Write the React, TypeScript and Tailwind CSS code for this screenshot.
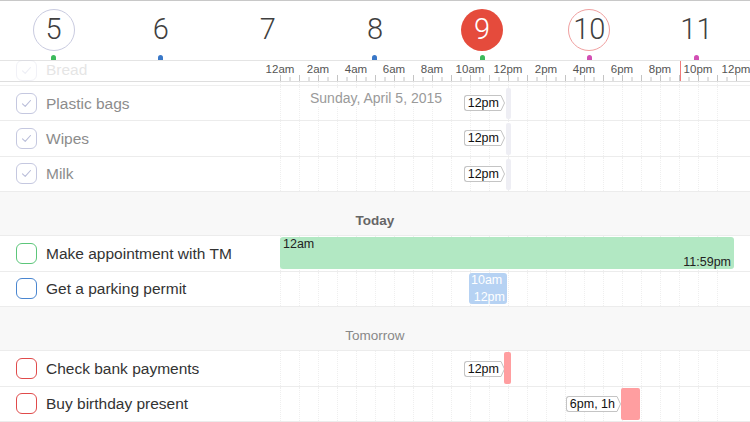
import React from 'react';

const days = [
  { n: '5', circle: 'border border-[#c9cbe0] text-[#3f3f3f]', dot: 'bg-[#3dba5c]' },
  { n: '6', circle: 'text-[#3f3f3f]', dot: 'bg-[#3a78c8]' },
  { n: '7', circle: 'text-[#3f3f3f]', dot: '' },
  { n: '8', circle: 'text-[#3f3f3f]', dot: 'bg-[#3a78c8]' },
  { n: '9', circle: 'bg-[#e54b3c] text-white', dot: 'bg-[#3dba5c]' },
  { n: '10', circle: 'border border-[#f0a0a0] text-[#3f3f3f]', dot: 'bg-[#d24fb4]' },
  { n: '11', circle: 'text-[#3f3f3f]', dot: 'bg-[#d24fb4]' },
];

const hours = ['12am', '2am', '4am', '6am', '8am', '10am', '12pm', '2pm', '4pm', '6pm', '8pm', '10pm', '12pm'];

function Grid() {
  return (
    <div className="absolute inset-0 flex pointer-events-none">
      {Array.from({ length: 24 }).map((_, i) => (
        <div key={i} className="w-[19px] shrink-0 h-full border-l border-dotted border-[#efefef]" />
      ))}
    </div>
  );
}

function Checkbox({ color, done }: { color: string; done?: boolean }) {
  return (
    <div className={`w-[21px] h-[21px] rounded-[6px] border flex items-center justify-center shrink-0 ${color}`}>
      {done && (
        <svg width="11" height="9" viewBox="0 0 11 9">
          <path d="M1.5 4.8 L4.2 7.3 L9.5 1.5" fill="none" stroke="#b9bdd9" strokeWidth="1.1" strokeLinecap="round" strokeLinejoin="round" />
        </svg>
      )}
    </div>
  );
}

function Tag({ text, className }: { text: string; className: string }) {
  return (
    <div className={`absolute flex items-center ${className}`}>
      <div className="h-[16px] pl-[3px] pr-[1px] bg-white border border-r-0 border-[#c4c4c4] rounded-l-[3px] text-[12.5px] leading-[14px] text-[#111]">
        {text}
      </div>
      <svg width="6" height="16" viewBox="0 0 6 16" className="-ml-px">
        <path d="M0 0.5 L2 0.5 L5.5 8 L2 15.5 L0 15.5" fill="white" stroke="#c4c4c4" strokeWidth="1" />
      </svg>
    </div>
  );
}

function Row({ box, label, done, children }: { box: string; label: string; done?: boolean; children?: React.ReactNode }) {
  return (
    <div className="flex h-[35.3px] border-b border-[#ececec]">
      <div className="w-[280px] shrink-0 flex items-center pl-4 gap-[9px]">
        <Checkbox color={box} done={done} />
        <span className={done ? 'text-[15.5px] text-[#8c8c8c]' : 'text-[15.5px] text-[#333]'}>{label}</span>
      </div>
      <div className="relative flex-1">
        <Grid />
        {children}
      </div>
    </div>
  );
}

function Section({ label, bold }: { label: string; bold?: boolean }) {
  return (
    <div className="h-[44.5px] bg-[#f8f8f8] border-b border-[#ececec] flex items-end justify-center pb-[4px]">
      <span className={bold ? 'text-[13.5px] font-bold text-[#666]' : 'text-[13.5px] text-[#888]'}>{label}</span>
    </div>
  );
}

export default function App() {
  return (
    <div className="w-[750px] h-[422px] overflow-hidden bg-white border-t border-[#c8c8c8] font-['Liberation_Sans',Arial,sans-serif]">
      {/* day strip */}
      <div className="grid grid-cols-7 border-b border-[#e4e4e4]">
        {days.map((d) => (
          <div key={d.n} className="flex flex-col items-center pt-[8px]">
            <div className={`w-[42px] h-[42px] rounded-full flex items-center justify-center font-['Roboto',sans-serif] font-light text-[29px] ${d.circle}`}>
              {d.n}
            </div>
            <div className={`mt-[4px] w-[5px] h-[5px] rounded-t-full ${d.dot}`} />
          </div>
        ))}
      </div>

      {/* ruler */}
      <div className="relative flex h-[21px] border-b border-[#dedede]">
        <div className="w-[280px] shrink-0 flex items-center pl-4 gap-[9px] opacity-25 -mt-[2px]">
          <Checkbox color="border-[#c9cbe0]" done />
          <span className="text-[15.5px] text-[#999]">Bread</span>
        </div>
        <div className="relative flex-1">
          <div className="flex -ml-[19px] pt-[2px]">
            {hours.map((h, i) => (
              <div key={i} className="w-[38px] shrink-0 text-center text-[11.5px] leading-[13px] text-[#555]">{h}</div>
            ))}
          </div>
          <svg width="470" height="7" className="absolute left-0 bottom-0">
            {Array.from({ length: 49 }).map((_, i) => (
              <line key={i} x1={i * 9.5 + 0.5} x2={i * 9.5 + 0.5} y1={i % 2 === 0 ? 1 : 3} y2={7} stroke="#c4c4c4" strokeWidth="1" />
            ))}
          </svg>
          <div className="absolute left-[400px] top-0 bottom-0 w-px bg-[#f07a7a]" />
        </div>
      </div>
      <div className="flex h-[4px] border-b border-[#efefef]">
        <div className="w-[280px]" />
        <div className="relative flex-1"><Grid /></div>
      </div>

      <Row box="border-[#c5c8e0]" label="Plastic bags" done>
        <div className="absolute left-[26px] top-[3px] px-[4px] bg-white/90 text-[14px] leading-[18px] text-[#9a9a9a]">Sunday, April 5, 2015</div>
        <Tag text="12pm" className="right-[calc(100%-225px)] top-1/2 -translate-y-1/2" />
        <div className="absolute left-[226px] top-[2px] bottom-[1px] w-[5px] rounded-[2px] bg-[#eeeef4]" />
      </Row>
      <Row box="border-[#c5c8e0]" label="Wipes" done>
        <Tag text="12pm" className="right-[calc(100%-225px)] top-1/2 -translate-y-1/2" />
        <div className="absolute left-[226px] top-[2px] bottom-[1px] w-[5px] rounded-[2px] bg-[#eeeef4]" />
      </Row>
      <Row box="border-[#c5c8e0]" label="Milk" done>
        <Tag text="12pm" className="right-[calc(100%-225px)] top-1/2 -translate-y-1/2" />
        <div className="absolute left-[226px] top-[2px] bottom-[1px] w-[5px] rounded-[2px] bg-[#eeeef4]" />
      </Row>

      <Section label="Today" bold />

      <Row box="border-[#5cc67a]" label="Make appointment with TM">
        <div className="absolute left-0 top-[1px] bottom-[2px] w-[454px] rounded-[3px] bg-[#b2e8c3] flex flex-col justify-between px-[3px] text-[12.5px] leading-[14px] text-[#222]">
          <span>12am</span>
          <span className="self-end">11:59pm</span>
        </div>
      </Row>
      <Row box="border-[#4a86d0]" label="Get a parking permit">
        <div className="absolute left-[189px] top-[1px] bottom-[2px] w-[38px] rounded-[3px] bg-[#b6d2f3] flex flex-col justify-between px-[2px] text-[12.5px] leading-[14px] text-white">
          <span>10am</span>
          <span className="self-end">12pm</span>
        </div>
      </Row>

      <Section label="Tomorrow" />

      <Row box="border-[#e04b4b]" label="Check bank payments">
        <Tag text="12pm" className="right-[calc(100%-225px)] top-1/2 -translate-y-1/2" />
        <div className="absolute left-[224px] top-[1px] bottom-[2px] w-[7px] rounded-[2px] bg-[#ff9ea0]" />
      </Row>
      <Row box="border-[#e04b4b]" label="Buy birthday present">
        <Tag text="6pm, 1h" className="right-[calc(100%-341px)] top-1/2 -translate-y-1/2" />
        <div className="absolute left-[341px] top-[1px] bottom-[1px] w-[19px] rounded-[2px] bg-[#ff9ea0]" />
      </Row>
    </div>
  );
}
